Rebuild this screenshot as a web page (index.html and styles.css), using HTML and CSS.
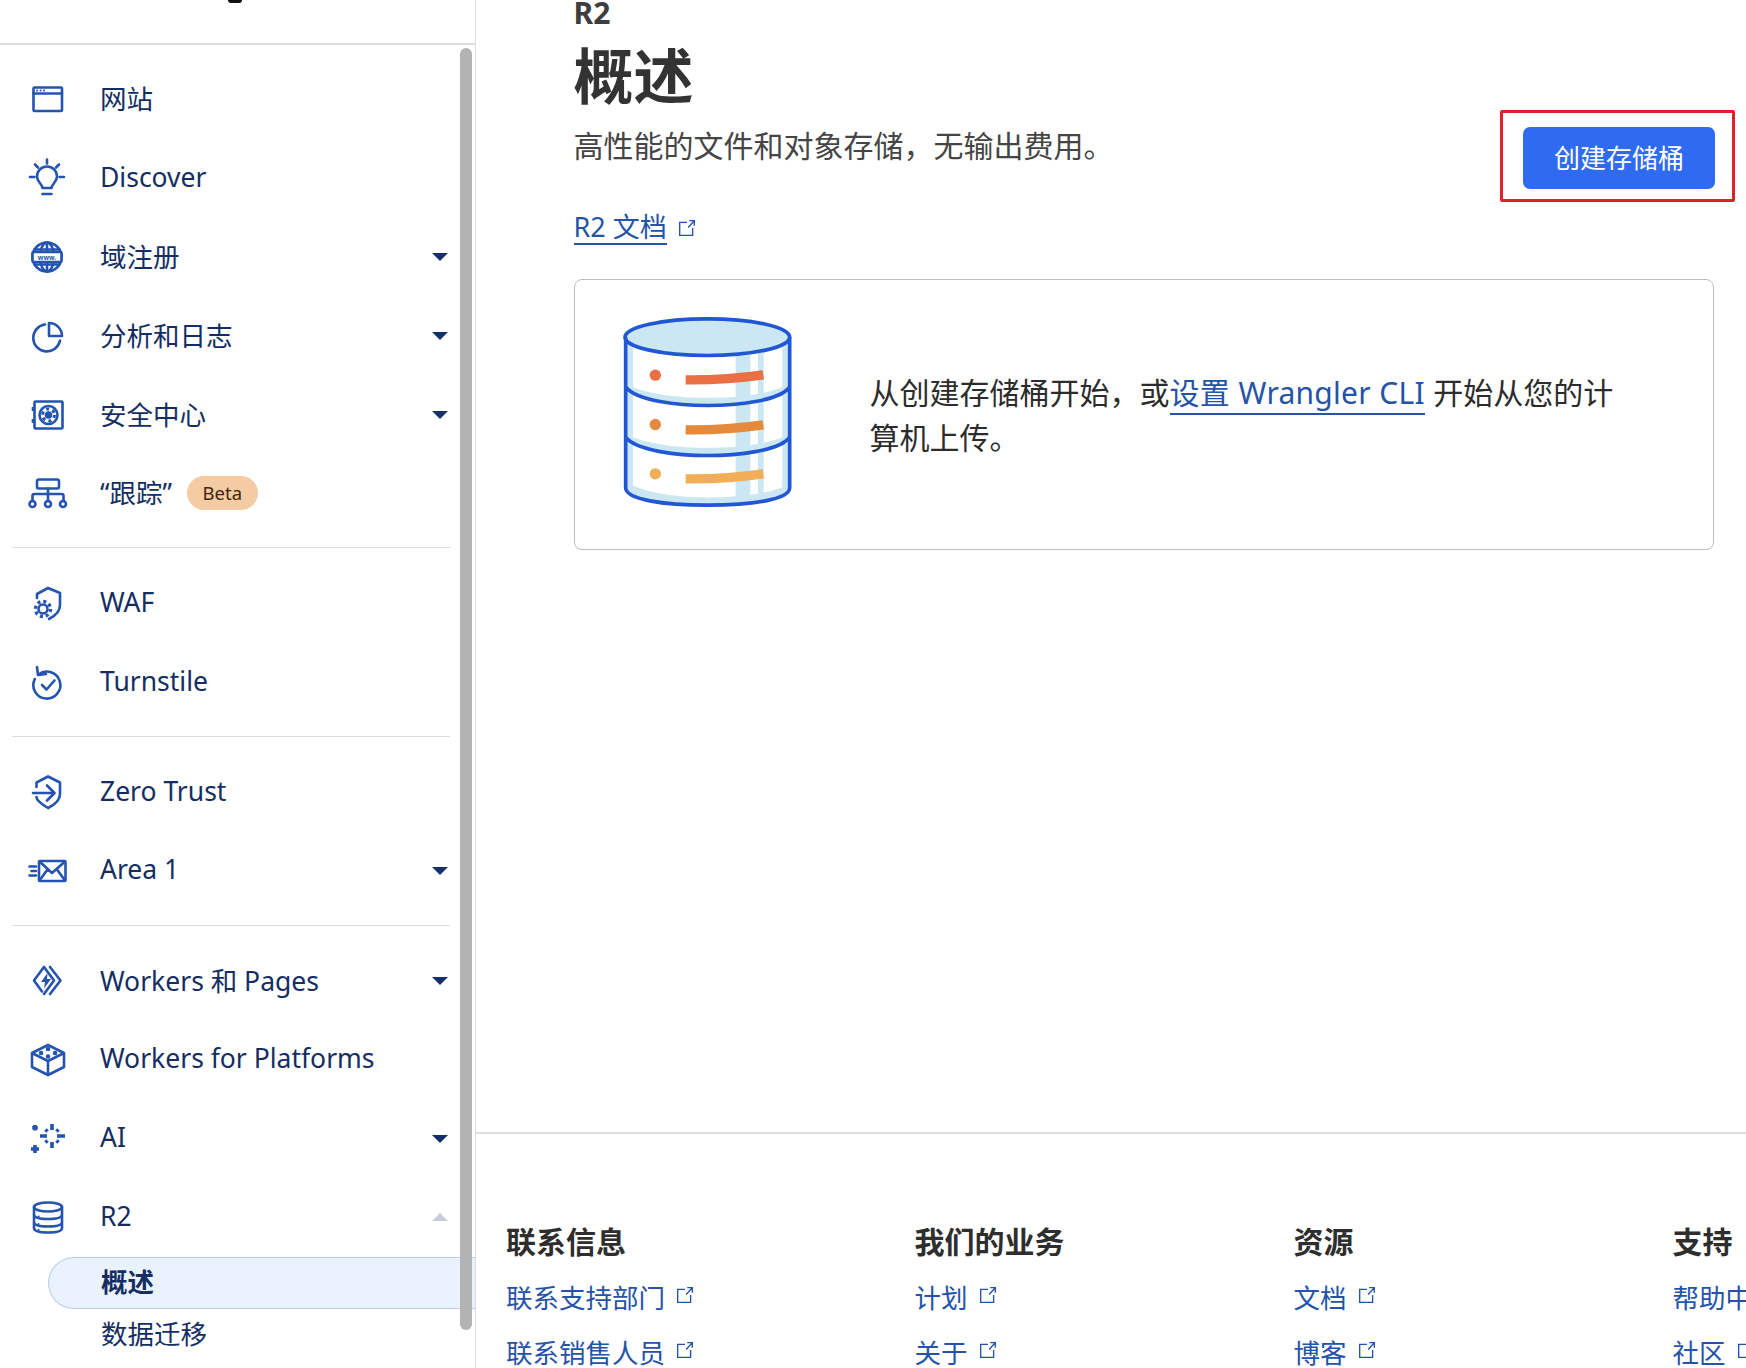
FILE: index.html
```html
<!DOCTYPE html>
<html lang="zh-CN">
<head>
<meta charset="utf-8">
<title>R2 概述</title>
<link rel="stylesheet" href="styles.css">
</head>
<body>
<div class="app">
  <aside class="sidebar">
    <div class="side-head"><span class="logo-tail"></span></div>
    <nav class="nav">
      <div class="nav-group">
        <a class="nav-item"><svg class="ico" viewBox="0 0 40 40"><rect x="6.500" y="8.500" width="28.500" height="23.500" rx="1"/><path d="M6.500 14.500h28.500"/><path class="dots" d="M10 11.500h.1M13.500 11.500h.1M17 11.500h.1"/></svg><span class="label">网站</span></a>
        <a class="nav-item"><svg class="ico" viewBox="0 0 40 40"><path d="M15.500 30c0-4-5.500-5.500-5.500-11.500a10 10 0 0 1 20 0c0 6-5.500 7.500-5.500 11.500z"/><path d="M15.500 36h9M20 1.500v4M3 19h4.500M32.500 19H37M8 6.500l3 3M32 6.500l-3 3"/></svg><span class="label">Discover</span></a>
        <a class="nav-item"><svg class="ico" viewBox="0 0 40 40"><circle cx="20" cy="20" r="14.500"/><ellipse cx="20" cy="20" rx="7" ry="14.500"/><path d="M20 5.500v29M7.500 12.500h25M7.500 27.500h25"/><rect class="band" x="5.500" y="15" width="29" height="10" rx="1"/><text class="www" x="20" y="22.500">www.</text></svg><span class="label">域注册</span><span class="caret"></span></a>
        <a class="nav-item"><svg class="ico" viewBox="0 0 40 40"><path d="M22 7a13 13 0 0 1 13 13H22z"/><path d="M18 8.500A13.500 13.500 0 1 0 33 24.500"/></svg><span class="label">分析和日志</span><span class="caret"></span></a>
        <a class="nav-item"><svg class="ico" viewBox="0 0 40 40"><rect x="7.500" y="6.500" width="28" height="27" rx="1"/><path class="thick" d="M6.500 12v4M6.500 24v4"/><circle cx="21.500" cy="20" r="9"/><circle class="solid" cx="21.500" cy="20" r="2.500"/><circle class="spoke" cx="21.500" cy="20" r="6"/></svg><span class="label">安全中心</span><span class="caret"></span></a>
        <a class="nav-item"><svg class="ico" viewBox="0 0 40 40"><rect x="10" y="6.500" width="22" height="9" rx="2"/><path d="M21 15.500V28M5.500 28v-5a2 2 0 0 1 2-2h27a2 2 0 0 1 2 2v5"/><circle cx="5.500" cy="31" r="3"/><circle cx="21" cy="31" r="3"/><circle cx="36" cy="31" r="3"/></svg><span class="label">“跟踪”</span><span class="badge">Beta</span></a>
      </div>
      <div class="nav-group">
        <a class="nav-item"><svg class="ico" viewBox="0 0 40 40"><path d="M10 15v-4l11-6 12 5v12c0 7-5 11-11 14"/><circle class="gear-teeth" cx="16" cy="26" r="7.500"/><circle cx="16" cy="26" r="4.500"/></svg><span class="label">WAF</span></a>
        <a class="nav-item"><svg class="ico" viewBox="0 0 40 40"><path d="M11.500 12.500A13.500 13.500 0 1 1 7.800 17"/><path d="M10 5l1 8 8-1M15 23l4.500 4.500 8-9"/></svg><span class="label">Turnstile</span></a>
      </div>
      <div class="nav-group">
        <a class="nav-item"><svg class="ico" viewBox="0 0 40 40"><path d="M9.500 15v-4.500L21 4.500l12 6V22c0 7-6 11-12 14-5-3-11.500-7-11.500-11"/><path d="M6 21h21M20 13.500l7.500 7.500-7.500 7.500"/></svg><span class="label">Zero Trust</span></a>
        <a class="nav-item"><svg class="ico" viewBox="0 0 40 40"><rect x="12" y="10" width="26.500" height="20" rx="1"/><path d="M12.500 10.500L25 22l13-11.500M12.500 29.500l8-11M38 29.500l-8-11M2.500 15.500H9M4.500 20H9M2.500 24.500H9"/></svg><span class="label">Area 1</span><span class="caret"></span></a>
      </div>
      <div class="nav-group">
        <a class="nav-item"><svg class="ico" viewBox="0 0 40 40"><path d="M23 6l10.500 13.500L23 33M17 6l10 13.500L17 33M17 6L7 19.500l8 11"/><path class="fill" d="M20.500 12L14 21h4l-1 6.500 7-9.500h-4z"/></svg><span class="label">Workers 和 Pages</span><span class="caret"></span></a>
        <a class="nav-item"><svg class="ico" viewBox="0 0 40 40"><path d="M21 5l16 8v14l-16 8-16-8V13zM5 13l16 8 16-8M21 21v14"/><path class="dots big" d="M21 9h.1M14 13h.1M28 13h.1M21 16.500h.1"/></svg><span class="label">Workers for Platforms</span></a>
        <a class="nav-item"><svg class="ico" viewBox="0 0 40 40"><path class="thick" d="M25 5v6M25 23v6M13 17h7M30 17h8M18.500 10.500l2 2M31.500 10.500l-2 2M18.500 23.500l2-2M31.500 23.500l-2-2M8 6v5.500M5.200 8.700h5.600M8 26v8M4 30h8"/></svg><span class="label">AI</span><span class="caret"></span></a>
        <a class="nav-item"><svg class="ico" viewBox="0 0 40 40"><ellipse cx="21" cy="10" rx="14" ry="4.500"/><path d="M7 10v21c0 3 6 4.500 14 4.500S35 34 35 31V10M7 17.500c0 3 6 4.500 14 4.500s14-1.500 14-4.500M7 25c0 3 6 4.500 14 4.500S35 28 35 25"/><path class="dots" d="M11.500 19.500h.1M11.500 27h.1M11.500 33h.1"/></svg><span class="label">R2</span><span class="caret up"></span></a>
        <a class="sub-item active">概述</a>
        <a class="sub-item">数据迁移</a>
      </div>
    </nav>
    <div class="scrollbar"></div>
  </aside>
  <main class="main">
    <div class="content">
      <header class="page-head">
        <div class="titles">
          <div class="crumb">R2</div>
          <h1 class="title">概述</h1>
          <p class="subtitle">高性能的文件和对象存储，无输出费用。</p>
          <p class="doc-row"><a class="doc-link">R2 文档</a><svg class="ext" viewBox="0 0 16 16"><path d="M8 3H1.500v11.500H13V8M9 7.500L14.500 1.500M10 1.500h4.500V6"/></svg></p>
        </div>
        <div class="highlight"><button class="primary">创建存储桶</button></div>
      </header>
      <section class="card">
        <svg class="db" viewBox="160 140 507 575">
          <path fill="#fff" d="M168 203V655C168 690 280 707 413 707 550 707 660 690 660 655V203Z"/>
          <path fill="#cbe7f3" d="M172 210h18v448h-18zM498 250h44v450h-44zM565 250h17v440h-17zM638 210h18v448h-18z"/>
          <path fill="#cbe7f3" d="M172 345C230 375 330 385 413 385 500 385 600 375 655 345V362C620 400 500 408 413 408 330 408 200 395 172 362Z"/>
          <path fill="#cbe7f3" d="M172 495C230 525 330 535 413 535 500 535 600 525 655 495V512C620 550 500 556 413 556 330 556 200 545 172 512Z"/>
          <path fill="#cbe7f3" d="M172 640C230 672 330 684 413 684 500 684 600 675 655 645V660C620 698 500 704 413 704 330 704 200 695 172 660Z"/>
          <ellipse cx="413" cy="203" rx="247" ry="55" fill="#cbe7f3" stroke="#2157d4" stroke-width="11"/>
          <path fill="none" stroke="#2157d4" stroke-width="11" stroke-linejoin="round" d="M168 203V655C168 690 280 707 413 707 550 707 660 690 660 655V203M168 352C200 395 330 408 413 408 500 408 630 395 660 352M168 503C200 545 330 558 413 558 500 558 630 545 660 503"/>
          <circle cx="257" cy="317" r="17" fill="#ea6f45"/>
          <circle cx="257" cy="465" r="17" fill="#e58a3c"/>
          <circle cx="257" cy="613" r="17" fill="#efae57"/>
          <path fill="none" stroke="#ea6f45" stroke-width="28" d="M348 331C430 332 510 326 581 316"/>
          <path fill="none" stroke="#e58a3c" stroke-width="28" d="M348 481C430 482 510 476 581 466"/>
          <path fill="none" stroke="#efae57" stroke-width="28" d="M348 628C430 629 510 623 581 613"/>
        </svg>
        <p class="card-text">从创建存储桶开始，或<a class="inline-link">设置 Wrangler CLI</a> 开始从您的计算机上传。</p>
      </section>
    </div>
    <footer class="footer">
      <div class="f-col first">
        <h3>联系信息</h3>
        <a>联系支持部门<svg class="ext" viewBox="0 0 16 16"><path d="M8 3H1.500v11.500H13V8M9 7.500L14.500 1.500M10 1.500h4.500V6"/></svg></a>
        <a>联系销售人员<svg class="ext" viewBox="0 0 16 16"><path d="M8 3H1.500v11.500H13V8M9 7.500L14.500 1.500M10 1.500h4.500V6"/></svg></a>
      </div>
      <div class="f-col">
        <h3>我们的业务</h3>
        <a>计划<svg class="ext" viewBox="0 0 16 16"><path d="M8 3H1.500v11.500H13V8M9 7.500L14.500 1.500M10 1.500h4.500V6"/></svg></a>
        <a>关于<svg class="ext" viewBox="0 0 16 16"><path d="M8 3H1.500v11.500H13V8M9 7.500L14.500 1.500M10 1.500h4.500V6"/></svg></a>
      </div>
      <div class="f-col">
        <h3>资源</h3>
        <a>文档<svg class="ext" viewBox="0 0 16 16"><path d="M8 3H1.500v11.500H13V8M9 7.500L14.500 1.500M10 1.500h4.500V6"/></svg></a>
        <a>博客<svg class="ext" viewBox="0 0 16 16"><path d="M8 3H1.500v11.500H13V8M9 7.500L14.500 1.500M10 1.500h4.500V6"/></svg></a>
      </div>
      <div class="f-col">
        <h3>支持</h3>
        <a>帮助中心<svg class="ext" viewBox="0 0 16 16"><path d="M8 3H1.500v11.500H13V8M9 7.500L14.500 1.500M10 1.500h4.500V6"/></svg></a>
        <a>社区<svg class="ext" viewBox="0 0 16 16"><path d="M8 3H1.500v11.500H13V8M9 7.500L14.500 1.500M10 1.500h4.500V6"/></svg></a>
      </div>
    </footer>
  </main>
</div>
</body>
</html>
```
FILE: styles.css
```css
* { box-sizing: border-box; }
html, body { margin: 0; height: 100%; overflow: hidden; background: #fff; }
body { font-family: "Noto Sans", "Noto Sans CJK SC", sans-serif; color: #333; }
a { text-decoration: none; }
.app { display: flex; width: 1746px; height: 1368px; overflow: hidden; }

/* sidebar */
.sidebar { position: relative; flex: 0 0 476px; height: 100%; border-right: 1px solid #dcdcdc; overflow: hidden; }
.side-head { position: relative; height: 45px; border-bottom: 2px solid #dedede; display: flex; justify-content: center; }
.logo-tail { width: 14px; height: 3px; margin-left: -6px; background: #111; border-radius: 0 0 8px 8px; }
.nav { padding-top: 15px; }
.nav-group { padding-bottom: 15.6px; margin-bottom: 15.6px; position: relative; }
.nav-group::after { content: ""; position: absolute; left: 12px; width: 438px; bottom: 0; height: 1px; background: #dddddd; }
.nav-group:last-child::after { display: none; }
.nav-item { display: flex; align-items: center; height: 78.8px; padding-left: 27px; color: #142e63; font-size: 26.500px; }
.label { margin-bottom: 3px; }
.ico { flex: none; width: 40px; height: 40px; margin-right: 33px; overflow: visible; fill: none; stroke: #2453b0; stroke-width: 2.600; stroke-linecap: round; stroke-linejoin: round; }
.ico .dots { stroke-width: 2; }
.ico .dots.big { stroke-width: 4.500; }
.ico .thick { stroke-width: 3.600; stroke-linecap: butt; }
.ico .fill { fill: #2453b0; stroke: none; }
.ico .solid { fill: #2453b0; }
.ico .spoke { stroke-width: 3; stroke-dasharray: 3 3.300; stroke-linecap: butt; }
.ico .gear-teeth { stroke-width: 3.400; stroke-dasharray: 3 2.900; stroke-linecap: butt; }
.ico .band { fill: #fff; }
.ico .www { fill: #2453b0; stroke: none; font-size: 6.500px; font-weight: 700; text-anchor: middle; }
.caret { margin-left: auto; margin-right: 27px; width: 0; height: 0; border-left: 8px solid transparent; border-right: 8px solid transparent; border-top: 8px solid #14306b; }
.caret.up { border-top: 0; border-bottom: 8px solid #c8ccd6; }
.badge { margin-left: 14.500px; height: 34px; padding: 0 16px; border-radius: 17px; background: #f4cba3; color: #42260c; font-size: 18.500px; line-height: 33px; }
.sub-item { display: block; height: 52px; margin-left: 48px; padding-left: 52px; font-size: 26.500px; line-height: 48px; color: #142e63; border: 1px solid transparent; }
.sub-item.active { background: #eaf2fd; border-color: #b8cdef; border-right: 0; border-radius: 26px 0 0 26px; font-weight: 700; }
.scrollbar { position: absolute; left: 460px; top: 48px; width: 12px; height: 1282px; background: #b3b3b3; border-radius: 6px; }

/* main */
.main { flex: 1; min-width: 0; height: 100%; display: flex; flex-direction: column; overflow: hidden; }
.content { flex: 1; min-height: 0; padding: 0 32px 0 97.500px; }
.page-head { display: flex; justify-content: space-between; align-items: flex-start; }
.crumb { font-size: 30px; font-weight: 700; line-height: 26px; color: #3d3d3d; }
.title { margin: 11.500px 0 0; font-size: 60px; font-weight: 700; line-height: 76px; color: #333; }
.subtitle { margin: 10.500px 0 0; font-size: 30px; line-height: 44px; color: #454545; }
.doc-row { margin: 41.500px 0 0; display: flex; align-items: center; height: 36px; font-size: 27px; color: #2453a8; }
.doc-link { color: #2453a8; border-bottom: 2px solid #2453a8; line-height: 33px; }
.ext { width: 18px; height: 18px; margin-left: 11px; fill: none; stroke: #2453a8; stroke-width: 1.200; }
.highlight { flex: none; margin: 110px -21px 0 0; padding: 14px 17px 9.500px 20px; border: 3px solid #e2202c; border-radius: 2px; }
.primary { display: block; width: 192px; height: 62px; padding: 0 0 2px; border: 0; border-radius: 7px; background: #2f6bf0; color: #fff; font: inherit; font-size: 26px; }
.card { margin-top: 33px; height: 271px; border: 1px solid #bdbdbd; border-radius: 8px; display: flex; align-items: center; padding-left: 48.500px; }
.db { flex: none; width: 169px; height: 192px; margin-bottom: 4.500px; }
.card-text { margin: 2px 0 0 77.500px; width: 750px; font-size: 30px; line-height: 45.500px; color: #2c2c2c; word-spacing: .5px; }
.inline-link { color: #2453a8; border-bottom: 2px solid #2453a8; letter-spacing: .25px; }

/* footer */
.footer { flex: 0 0 236.500px; border-top: 2px solid #e0e0e0; display: flex; padding: 87px 0 0 30px; overflow: hidden; }
.f-col { flex: 0 0 379px; display: flex; flex-direction: column; align-items: flex-start; }
.f-col.first { flex-basis: 408.500px; }
.f-col h3 { flex: none; margin: 0 0 21px; font-size: 30px; font-weight: 700; line-height: 42px; color: #2e2e2e; white-space: nowrap; }
.f-col a { flex: none; display: flex; align-items: center; height: 28px; font-size: 26.500px; line-height: 28px; color: #2453a8; white-space: nowrap; }
.f-col a + a { margin-top: 27px; }
.f-col .ext { margin-bottom: 6px; }
```
